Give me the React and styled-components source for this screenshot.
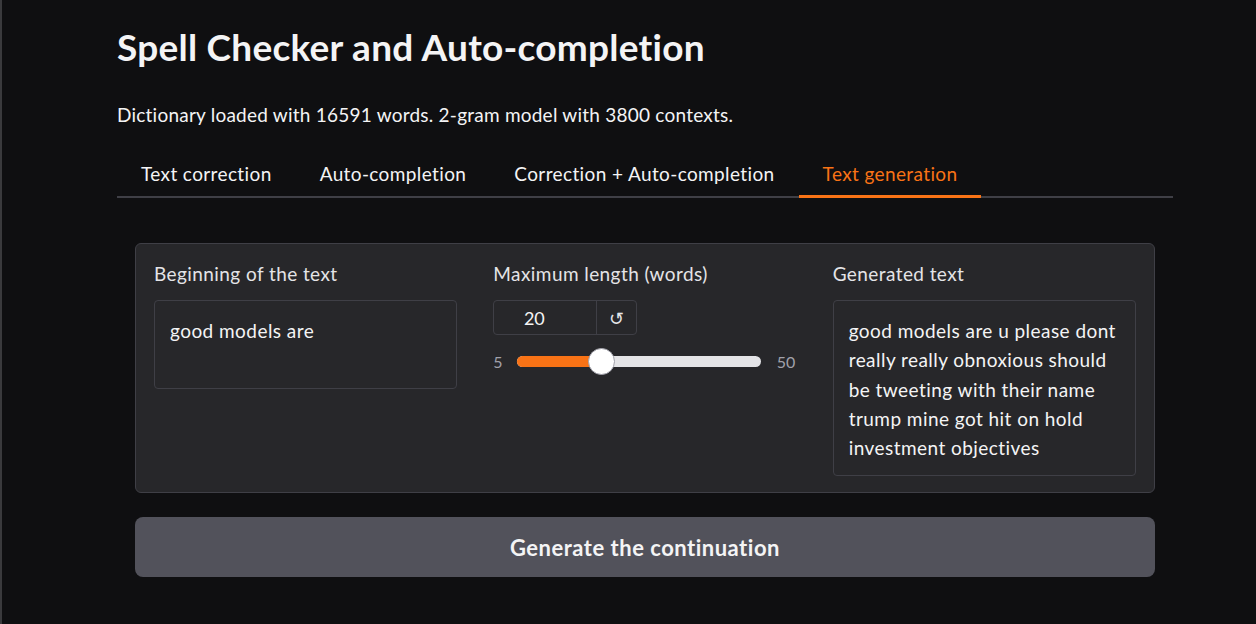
import styled, { createGlobalStyle } from "styled-components";

const GlobalStyle = createGlobalStyle`
  html, body {
    margin: 0;
    padding: 0;
    background: #0f0f11;
  }
  body {
    font-family: "Lato", "Noto Sans", sans-serif;
    color: #f4f4f5;
  }
`;

const Page = styled.div`
  min-height: 624px;
  box-sizing: border-box;
  border-left: 2px solid #3a3a3d;
  padding: 0 0 0 115px;
  width: 1173px;
`;

const Title = styled.h1`
  margin: 0;
  padding-top: 25px;
  font-size: 37px;
  font-weight: 700;
  line-height: 44px;
  letter-spacing: 0.25px;
  color: #f4f4f5;
`;

const Info = styled.p`
  margin: 0;
  padding-top: 32px;
  font-size: 19px;
  line-height: 28px;
  letter-spacing: 0.23px;
  color: #f4f4f5;
`;

const TabBar = styled.div`
  display: flex;
  margin-top: 26px;
  border-bottom: 2px solid #3f3f46;
`;

const Tab = styled.div`
  padding: 8px 24px 10px;
  font-size: 19px;
  line-height: 22px;
  letter-spacing: 0.38px;
  color: ${(p) => (p.$active ? "#f97316" : "#f4f4f5")};
  border-bottom: 3px solid ${(p) => (p.$active ? "#f97316" : "transparent")};
  margin-bottom: -2px;
`;

const Body = styled.div`
  padding: 45px 18px 0;
`;

const Panel = styled.div`
  display: grid;
  grid-template-columns: 1fr 1fr 1fr;
  column-gap: 36px;
  padding: 16px 18px 16px;
  background: #27272a;
  border: 1px solid #3f3f46;
  border-radius: 6px;
`;

const Column = styled.div`
  display: flex;
  flex-direction: column;
`;

const Label = styled.div`
  font-size: 19px;
  line-height: 28px;
  letter-spacing: 0.42px;
  color: #e4e4e7;
  margin-bottom: 12px;
`;

const TextBox = styled.div`
  box-sizing: border-box;
  min-height: ${(p) => p.$min || 0}px;
  padding: 15px 15px 13px;
  border: 1px solid #3f3f46;
  border-radius: 4px;
  background: #27272a;
  font-size: 19px;
  line-height: 29.25px;
  letter-spacing: 0.45px;
  color: #f4f4f5;
`;

const NumberRow = styled.div`
  display: flex;
  width: 144px;
  height: 35px;
  box-sizing: border-box;
  border: 1px solid #3f3f46;
  border-radius: 4px;
`;

const NumberValue = styled.div`
  width: 103px;
  box-sizing: border-box;
  padding-right: 22px;
  display: flex;
  align-items: center;
  justify-content: center;
  border-right: 1px solid #3f3f46;
  font-size: 18px;
  color: #f4f4f5;
`;

const ResetButton = styled.div`
  flex: 1;
  display: flex;
  align-items: center;
  justify-content: center;
  font-size: 18px;
  color: #e4e4e7;
`;

const SliderRow = styled.div`
  display: flex;
  align-items: center;
  gap: 10px;
  margin-top: 12px;
  height: 28px;
`;

const SliderEnd = styled.span`
  font-size: 16px;
  color: #a1a1aa;
  width: ${(p) => p.$w}px;
  text-align: ${(p) => p.$align};
`;

const Track = styled.div`
  position: relative;
  width: 244px;
  height: 11px;
  border-radius: 6px;
  background: #e4e4e7;
`;

const Fill = styled.div`
  height: 100%;
  border-radius: 6px;
  background: #f97316;
`;

const Thumb = styled.div`
  position: absolute;
  top: 50%;
  width: 25px;
  height: 25px;
  margin: -13.5px 0 0 -13.5px;
  border-radius: 50%;
  background: #ffffff;
  border: 1px solid #a1a1aa;
`;

const GenerateButton = styled.button`
  display: block;
  width: 100%;
  height: 60px;
  margin-top: 24px;
  padding: 0;
  border: none;
  border-radius: 8px;
  background: #52525b;
  color: #f4f4f5;
  font-family: inherit;
  font-size: 22px;
  font-weight: 700;
  letter-spacing: 0.5px;
`;

export default function App() {
  const value = 20;
  const ratio = (value - 5) / (50 - 5);
  const pos = `calc(11.5px + ${ratio} * (100% - 25px))`;

  return (
    <>
      <GlobalStyle />
      <Page>
        <Title>Spell Checker and Auto-completion</Title>
        <Info>
          Dictionary loaded with 16591 words. 2-gram model with 3800 contexts.
        </Info>
        <TabBar>
          <Tab>Text correction</Tab>
          <Tab>Auto-completion</Tab>
          <Tab>Correction + Auto-completion</Tab>
          <Tab $active>Text generation</Tab>
        </TabBar>
        <Body>
          <Panel>
            <Column>
              <Label>Beginning of the text</Label>
              <TextBox $min={89}>good models are</TextBox>
            </Column>
            <Column>
              <Label>Maximum length (words)</Label>
              <NumberRow>
                <NumberValue>{value}</NumberValue>
                <ResetButton>↺</ResetButton>
              </NumberRow>
              <SliderRow>
                <SliderEnd $w={14} $align="left">5</SliderEnd>
                <Track>
                  <Fill style={{ width: pos }} />
                  <Thumb style={{ left: pos }} />
                </Track>
                <SliderEnd $w={24} $align="right">50</SliderEnd>
              </SliderRow>
            </Column>
            <Column>
              <Label>Generated text</Label>
              <TextBox>
                good models are u please dont really really obnoxious should be
                tweeting with their name trump mine got hit on hold investment
                objectives
              </TextBox>
            </Column>
          </Panel>
          <GenerateButton>Generate the continuation</GenerateButton>
        </Body>
      </Page>
    </>
  );
}
